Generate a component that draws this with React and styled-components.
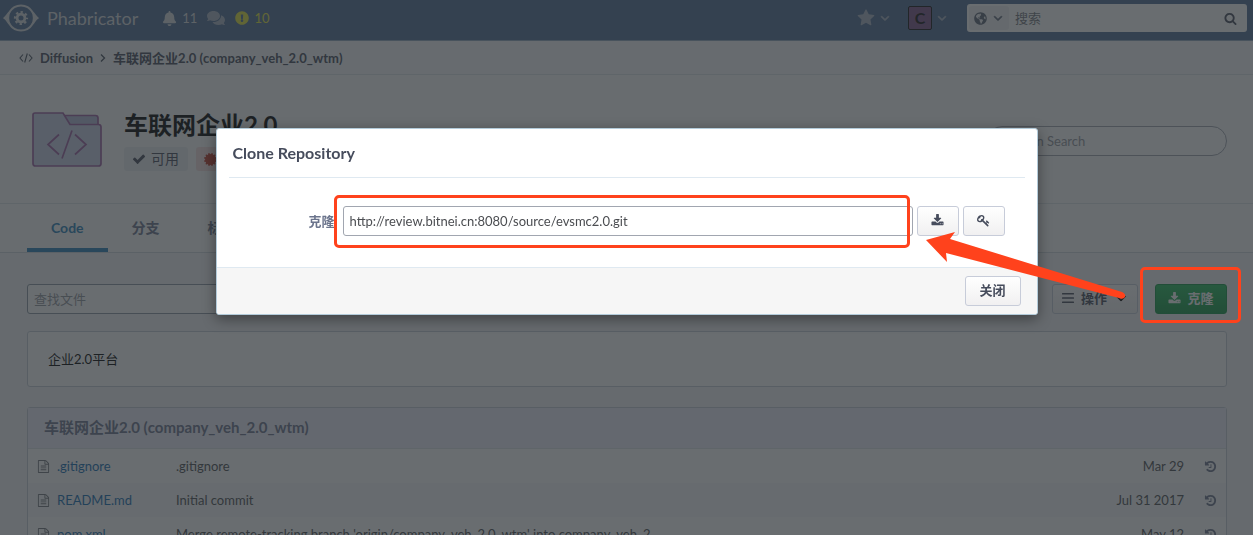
import React from "react";
import styled, { createGlobalStyle } from "styled-components";
import {
  FaBell,
  FaCertificate,
  FaComments,
  FaExclamationCircle,
  FaGlobeAmericas,
} from "react-icons/fa";

const GlobalStyle = createGlobalStyle`
  * {
    box-sizing: border-box;
  }
  body {
    margin: 0;
    overflow: hidden;
    background: #f3f5f7;
    color: #4b4d51;
    font-family: Lato, "Noto Sans CJK SC", sans-serif;
    font-size: 13px;
    line-height: 18px;
  }
  button, input {
    font-family: inherit;
    font-size: 13px;
    line-height: 18px;
  }
  a {
    color: inherit;
    text-decoration: none;
  }
`;

const PATHS = {
  download:
    "M1344 1344q0-26-19-45t-45-19-45 19-19 45 19 45 45 19 45-19 19-45zm256 0q0-26-19-45t-45-19-45 19-19 45 19 45 45 19 45-19 19-45zm128-224v320q0 40-28 68t-68 28h-1472q-40 0-68-28t-28-68v-320q0-40 28-68t68-28h465l135 136q58 56 136 56t136-56l136-136h464q40 0 68 28t28 68zm-325-569q17 41-14 70l-448 448q-18 19-45 19t-45-19l-448-448q-31-29-14-70 17-39 59-39h256v-448q0-26 19-45t45-19h256q26 0 45 19t19 45v448h256q42 0 59 39z",
  key:
    "M832 512q0-80-56-136t-136-56-136 56-56 136q0 42 19 83-41-19-83-19-80 0-136 56t-56 136 56 136 136 56 136-56 56-136q0-42-19-83 41 19 83 19 80 0 136-56t56-136zm851 704q0 17-49 66t-66 49q-9 0-28.5-16t-36.5-33-38.5-40-24.5-26l-96 96 220 220q28 28 28 68 0 42-39 81t-81 39q-40 0-68-28l-671-671q-176 131-365 131-163 0-265.5-102.5t-102.5-265.5q0-160 95-313t248-248 313-95q163 0 265.5 102.5t102.5 265.5q0 189-131 365l355 355 96-96q-3-3-26-24.5t-40-38.5-33-36.5-16-28.5q0-17 49-66t66-49q13 0 23 10 6 6 46 44.5t82 79.5 86.5 86 73 78 28.5 41z",
  history:
    "M1664 896q0 156-61 298t-164 245-245 164-298 61q-172 0-327-72.5t-264-204.5q-7-10-6.5-22.5t8.5-20.5l137-138q10-9 25-9 16 2 23 12 73 95 179 147t225 52q104 0 198.5-40.5t163.5-109.5 109.5-163.5 40.5-198.5-40.5-198.5-109.5-163.5-163.5-109.5-198.5-40.5q-98 0-188 35.5t-160 101.5l137 138q31 30 14 69-17 40-59 40h-448q-26 0-45-19t-19-45v-448q0-42 40-59 39-17 69 14l130 129q107-101 244.5-156.5t284.5-55.5q156 0 298 61t245 164 164 245 61 298zm-640-288v448q0 14-9 23t-23 9h-320q-14 0-23-9t-9-23v-64q0-14 9-23t23-9h224v-352q0-14 9-23t23-9h64q14 0 23 9t9 23z",
  check:
    "M1671 566q0 40-28 68l-724 724-136 136q-28 28-68 28t-68-28l-136-136-362-362q-28-28-28-68t28-68l136-136q28-28 68-28t68 28l294 295 656-657q28-28 68-28t68 28l136 136q28 28 28 68z",
  star:
    "M1728 647q0 22-26 48l-363 354 86 500q1 7 1 20 0 21-10.5 35.5t-30.5 14.5q-19 0-40-12l-449-236-449 236q-22 12-40 12-21 0-31.5-14.5t-10.5-35.5q0-6 2-20l86-500-364-354q-25-27-25-48 0-37 56-46l502-73 225-455q19-41 49-41t49 41l225 455 502 73q56 9 56 46z",
  search:
    "M1216 832q0-185-131.5-316.5t-316.5-131.5-316.5 131.5-131.5 316.5 131.5 316.5 316.5 131.5 316.5-131.5 131.5-316.5zm512 832q0 52-38 90t-90 38q-54 0-90-38l-343-342q-179 124-399 124-143 0-273.5-55.5t-225-150-150-225-55.5-273.5 55.5-273.5 150-225 225-150 273.5-55.5 273.5 55.5 225 150 150 225 55.5 273.5q0 220-124 399l343 343q37 37 37 90z",
  bars:
    "M192 256h1408q64 0 64 64v64q0 64-64 64H192q-64 0-64-64v-64q0-64 64-64zm0 544h1408q64 0 64 64v64q0 64-64 64H192q-64 0-64-64v-64q0-64 64-64zm0 544h1408q64 0 64 64v64q0 64-64 64H192q-64 0-64-64v-64q0-64 64-64z",
  angleDown:
    "M1395 736q0 13-10 23l-466 466q-10 10-23 10t-23-10l-466-466q-10-10-10-23t10-23l50-50q10-10 23-10t23 10l393 393 393-393q10-10 23-10t23 10l50 50q10 10 10 23z",
  file:
    "M1596 380q28 28 48 76t20 88v1152q0 40-28 68t-68 28h-1344q-40 0-68-28t-28-68v-1600q0-40 28-68t68-28h896q40 0 88 20t76 48zm-444-244v376h376q-10-29-22-41l-313-313q-12-12-41-22zm384 1528v-1024h-416q-40 0-68-28t-28-68v-416h-768v1536h1280zm-1024-864q0-14 9-23t23-9h704q14 0 23 9t9 23v64q0 14-9 23t-23 9h-704q-14 0-23-9t-9-23v-64zm736 224q14 0 23 9t9 23v64q0 14-9 23t-23 9h-704q-14 0-23-9t-9-23v-64q0-14 9-23t23-9h704zm0 256q14 0 23 9t9 23v64q0 14-9 23t-23 9h-704q-14 0-23-9t-9-23v-64q0-14 9-23t23-9h704z",
};

const Glyph = ({ name, size = 14, bold }) => (
  <svg
    width={size}
    height={size}
    viewBox="0 0 1792 1792"
    fill="currentColor"
    stroke={bold ? "currentColor" : "none"}
    strokeWidth="90"
    aria-hidden="true"
  >
    <path d={PATHS[name]} />
  </svg>
);

const CodeGlyph = () => (
  <svg width="14" height="10" viewBox="0 0 14 10" fill="none" stroke="currentColor" strokeWidth="1.1">
    <path d="M4 1.5L1 5l3 3.5M10 1.5L13 5l-3 3.5M8.3 0.5L5.7 9.5" />
  </svg>
);

const Logo = () => (
  <svg width="36" height="28" viewBox="0 0 36 28" fill="none" aria-hidden="true">
    <path
      d="M1.5 14C3.5 12.5 5 10 6.5 8C9 4 13 1.5 18 1.5S27 4 29.5 8C31 10 32.5 12.5 34.500 14C32.5 15.5 31 18 29.5 20C27 24 23 26.5 18 26.5S9 24 6.5 20C5 18 3.5 15.5 1.5 14Z"
      stroke="#d5d9de"
      strokeWidth="2"
    />
    <path d="M8 7L1 14l7 7C5.500 16.500 5.500 11.500 8 7ZM28 7L35 14l-7 7C30.500 16.500 30.500 11.500 28 7Z" fill="#d5d9de" />
    <circle cx="18" cy="14" r="3.900" stroke="#d5d9de" strokeWidth="2.800" />
    <circle cx="18" cy="14" r="6" stroke="#d5d9de" strokeWidth="2.200" strokeDasharray="2.36 2.352" strokeDashoffset="1.180" />
  </svg>
);

const FolderArt = () => (
  <svg width="70" height="55" viewBox="0 0 70 55" fill="#c9d0e8" stroke="#9c5fa0" strokeWidth="1.700" aria-hidden="true">
    <path d="M30 3.500h33.500q2.500 0 2.500 2.500v10H38z" fill="#b3bad6" />
    <path d="M3 1h28l7 11.500h28.500q2.500 0 2.500 2.500v36.500q0 2.500-2.500 2.500H3.500Q1 54 1 51.500V3q0-2 2-2z" />
    <path d="M27 22.500L16 32.500l11 10M43 22.500l11 10-11 10M40 18.500L30 46.500" fill="none" />
  </svg>
);

const TopBar = styled.header`
  display: flex;
  align-items: center;
  height: 41px;
  padding: 0 6px 4px 3px;
  background: #4f6d93;
  border-bottom: 1px solid #8fa9c0;
  color: #fff;
`;

const Brand = styled.a`
  display: flex;
  align-items: center;
  gap: 8px;
  font-size: 18px;
  color: #d5d9de;
`;

const Alerts = styled.nav`
  display: flex;
  align-items: center;
  gap: 10px;
  margin-left: 24px;
`;

const Alert = styled.a`
  display: flex;
  align-items: center;
  gap: 5px;
  color: ${(p) => p.$color || "#d5d9de"};
`;

const UserMenu = styled.div`
  display: flex;
  align-items: center;
  gap: 16px;
  margin-left: auto;
  margin-right: 18px;
`;

const MenuButton = styled.button`
  display: flex;
  align-items: center;
  gap: 3px;
  padding: 0;
  border: 0;
  background: none;
  color: #a9b3c3;
`;

const Avatar = styled.span`
  display: grid;
  place-items: center;
  width: 24px;
  height: 24px;
  border: 1px solid #111;
  border-radius: 2px;
  background: #7a5088;
  color: #111;
  font-size: 16px;
  font-weight: bold;
`;

const SearchBox = styled.form`
  display: flex;
  align-items: center;
  width: 280px;
  height: 28px;
  padding: 2px 10px 2px 2px;
  border-radius: 3px;
  background: #fff;
  color: #464c5c;
`;

const Scope = styled.button`
  display: flex;
  align-items: center;
  justify-content: center;
  gap: 4px;
  width: 40px;
  height: 24px;
  padding: 0;
  border: 0;
  border-radius: 3px;
  background: #f0f2f4;
  color: #5d6577;
`;

const BareInput = styled.input`
  flex: 1;
  min-width: 0;
  padding: 0 6px;
  border: 0;
  outline: 0;
  background: none;
  &::placeholder {
    color: #74777d;
  }
`;

const IconButton = styled.button`
  display: flex;
  padding: 0;
  border: 0;
  background: none;
  color: inherit;
`;

const Crumbs = styled.nav`
  display: flex;
  align-items: center;
  gap: 7px;
  height: 34px;
  padding: 0 19px;
  border-bottom: 1px solid #dde3e8;
  background: #f7f9fa;
  color: #464c5c;
  font-weight: bold;
`;

const Profile = styled.section`
  display: flex;
  align-items: flex-start;
  height: 129px;
  padding: 37px 26px 0 32px;
  border-bottom: 1px solid #dde3e8;
  background: #fafbfc;
`;

const Heading = styled.div`
  margin: -4px auto 0 22px;
`;

const RepoName = styled.h1`
  margin: 0 0 6px;
  color: #000;
  font-size: 24px;
  line-height: 33px;
`;

const Tags = styled.div`
  display: flex;
  gap: 8px;
`;

const Tag = styled.span`
  display: flex;
  align-items: center;
  gap: 5px;
  min-width: 64px;
  height: 24px;
  padding: 0 8px;
  border-radius: 3px;
  background: ${(p) => (p.$danger ? "#f3dede" : "#eceef1")};
  color: ${(p) => (p.$danger ? "#c0392b" : "#464c5c")};
  font-size: 14px;
`;

const PatternSearch = styled.input`
  width: 240px;
  height: 30px;
  margin-top: 14px;
  padding: 0 14px;
  border: 1px solid #a1a6b0;
  border-radius: 15px;
  background: #fff;
  &::placeholder {
    color: #92969d;
  }
`;

const Tabs = styled.nav`
  display: flex;
  height: 49px;
  padding-left: 27px;
  border-bottom: 1px solid #cfd6dd;
  background: #fafbfc;
`;

const Tab = styled.a`
  display: flex;
  align-items: center;
  height: 48px;
  padding: 4px 24px 0;
  border-bottom: 4px solid ${(p) => (p.$active ? "#2980b9" : "transparent")};
  color: ${(p) => (p.$active ? "#2980b9" : "#6b748c")};
  font-size: 14px;
  font-weight: bold;
`;

const Main = styled.main`
  padding: 31px 26px 0 27px;
`;

const Toolbar = styled.div`
  display: flex;
  align-items: center;
  gap: 17px;
`;

const FileSearch = styled.input`
  width: 280px;
  height: 30px;
  margin-right: auto;
  padding: 0 6px;
  border: 1px solid #8c98a3;
  border-radius: 3px;
  background: #fff;
  &::placeholder {
    color: #92969d;
  }
`;

const Button = styled.button`
  display: inline-flex;
  align-items: center;
  justify-content: center;
  gap: 6px;
  min-width: ${(p) => p.$width};
  height: 30px;
  padding: 0 0 2px;
  border: 1px solid ${(p) => (p.$green ? "#139543" : "#c7ccd9")};
  border-radius: 3px;
  background: ${(p) =>
    p.$green
      ? "linear-gradient(to bottom, #23bb5b, #139543)"
      : "linear-gradient(to bottom, #fff, #f1f0f1)"};
  color: ${(p) => (p.$green ? "#fff" : "#464c5c")};
  font-weight: bold;
`;

const Caret = styled.span`
  display: flex;
  color: #000;
`;

const CloneSpot = styled.div`
  position: relative;
`;

const Mark = styled.div`
  position: absolute;
  inset: ${(p) => p.$inset};
  z-index: 30;
  border: 3px solid #ff421c;
  border-radius: 5px;
  pointer-events: none;
`;

const Panel = styled.section`
  margin-top: ${(p) => p.$gap};
  border: 1px solid #c7ced8;
  border-radius: 3px;
  background: #fff;
`;

const Readme = styled.p`
  margin: 0;
  padding: 18px 20px;
  color: #000;
`;

const PanelTitle = styled.h2`
  margin: 0;
  padding: 10px 16px 11px;
  border-bottom: 1px solid #dde3e8;
  background: #eeeefa;
  color: #6b748c;
  font-size: 15px;
  line-height: 19px;
`;

const Files = styled.table`
  width: 100%;
  border-collapse: collapse;
  tr:nth-child(even) {
    background: #f7f9fa;
  }
  td {
    height: 34px;
    padding: 0;
  }
`;

const NameCell = styled.td`
  width: 148px;
  color: #136cb2;
  a {
    display: flex;
    align-items: center;
    gap: 7px;
    padding-left: 9px;
  }
  svg {
    color: #74777d;
  }
`;

const DateCell = styled.td`
  width: 160px;
  text-align: right;
`;

const HistoryCell = styled.td`
  width: 42px;
  a {
    display: flex;
    justify-content: center;
    padding-left: 10px;
    color: #6b748c;
  }
`;

const Mask = styled.div`
  position: fixed;
  inset: 0;
  z-index: 10;
  background: rgba(41, 47, 51, 0.7);
`;

const Dialog = styled.div`
  position: fixed;
  top: 128px;
  left: 0;
  right: 0;
  z-index: 20;
  width: 822px;
  max-width: 96%;
  margin: 0 auto;
  border: 1px solid #b3cbda;
  border-radius: 3px;
  background: #fff;
  box-shadow: 0 4px 14px rgba(0, 0, 0, 0.4);
`;

const DialogTitle = styled.h2`
  margin: 0 12px;
  padding: 14px 4px 15px;
  border-bottom: 1px solid #dfe9f1;
  color: #464c5c;
  font-size: 16px;
  line-height: 19px;
`;

const CloneRow = styled.div`
  display: flex;
  align-items: center;
  gap: 4px;
  padding: 28px 32px 31px 92px;
`;

const CloneLabel = styled.label`
  margin-right: 4px;
  color: #6b748c;
  font-weight: bold;
`;

const UriField = styled.div`
  position: relative;
  flex: 1;
`;

const UriInput = styled.input`
  display: block;
  width: 100%;
  height: 30px;
  padding: 0 6px;
  border: 1px solid #a1a6b0;
  border-radius: 3px;
  background: #fff;
  color: #4b4d51;
`;

const DialogFoot = styled.footer`
  display: flex;
  justify-content: flex-end;
  padding: 8px 16px;
  border-top: 1px solid #dfe9f1;
  border-radius: 0 0 3px 3px;
  background: #f6f6f6;
`;

const Arrow = styled.svg`
  position: absolute;
  top: 101px;
  left: 706px;
  z-index: 40;
  pointer-events: none;
`;

const FILES = [
  { name: ".gitignore", message: ".gitignore", date: "Mar 29" },
  { name: "README.md", message: "Initial commit", date: "Jul 31 2017" },
  {
    name: "pom.xml",
    message: "Merge remote-tracking branch 'origin/company_veh_2.0_wtm' into company_veh_2",
    date: "May 12",
  },
];

function Header() {
  return (
    <TopBar>
      <Brand href="#">
        <Logo />
        Phabricator
      </Brand>
      <Alerts>
        <Alert href="#">
          <FaBell size={15} />
          11
        </Alert>
        <Alert href="#" $color="#a9b3c3" aria-label="Messages">
          <FaComments size={18} />
        </Alert>
        <Alert href="#" $color="#e5e53a">
          <FaExclamationCircle size={14} />
          10
        </Alert>
      </Alerts>
      <UserMenu>
        <MenuButton aria-label="Favorites">
          <Glyph name="star" size={18} />
          <Glyph name="angleDown" bold />
        </MenuButton>
        <MenuButton aria-label="Account">
          <Avatar>C</Avatar>
          <Glyph name="angleDown" bold />
        </MenuButton>
      </UserMenu>
      <SearchBox>
        <Scope type="button" aria-label="Search scope">
          <FaGlobeAmericas size={13} />
          <Glyph name="angleDown" bold />
        </Scope>
        <BareInput placeholder="搜索" aria-label="搜索" />
        <IconButton aria-label="Submit search">
          <Glyph name="search" size={13} />
        </IconButton>
      </SearchBox>
    </TopBar>
  );
}

function CloneDialog() {
  return (
    <Dialog role="dialog" aria-labelledby="clone-title">
      <DialogTitle id="clone-title">Clone Repository</DialogTitle>
      <CloneRow>
        <CloneLabel htmlFor="clone-uri">克隆</CloneLabel>
        <UriField>
          <UriInput id="clone-uri" readOnly value="http://review.bitnei.cn:8080/source/evsmc2.0.git" />
          <Mark $inset="-11px 3px -12px -9px" />
        </UriField>
        <Button $width="42px" aria-label="Download">
          <Glyph name="download" size={13} />
        </Button>
        <Button $width="42px" aria-label="Manage credentials">
          <Glyph name="key" size={13} />
        </Button>
      </CloneRow>
      <DialogFoot>
        <Button $width="56px">关闭</Button>
      </DialogFoot>
      <Arrow width="206" height="76" viewBox="0 0 206 76" aria-hidden="true">
        <path
          d="M3 10L32 2L27 9L199 62Q203 64 202 67Q200 70 196 68L23 23L24 32Z"
          fill="#ff421c"
        />
      </Arrow>
    </Dialog>
  );
}

export default function App() {
  return (
    <>
      <GlobalStyle />
      <Header />
      <Crumbs>
        <CodeGlyph />
        <a href="#">Diffusion</a>
        <svg width="6" height="8" viewBox="0 0 6 8" fill="none" stroke="currentColor" strokeWidth="1.3">
          <path d="M1 0.5L4.5 4L1 7.5" />
        </svg>
        <span>车联网企业2.0 (company_veh_2.0_wtm)</span>
      </Crumbs>
      <Profile>
        <FolderArt />
        <Heading>
          <RepoName>车联网企业2.0</RepoName>
          <Tags>
            <Tag>
              <Glyph name="check" />
              可用
            </Tag>
            <Tag $danger>
              <FaCertificate size={13} />
            </Tag>
          </Tags>
        </Heading>
        <PatternSearch placeholder="Pattern Search" aria-label="Pattern Search" />
      </Profile>
      <Tabs>
        <Tab href="#" $active>
          Code
        </Tab>
        <Tab href="#">分支</Tab>
        <Tab href="#">标签</Tab>
      </Tabs>
      <Main>
        <Toolbar>
          <FileSearch placeholder="查找文件" aria-label="查找文件" />
          <Button $width="86px">
            <Glyph name="bars" />
            操作
            <Caret>
              <Glyph name="angleDown" size={16} bold />
            </Caret>
          </Button>
          <CloneSpot>
            <Button $width="72px" $green>
              <Glyph name="download" size={13} />
              克隆
            </Button>
            <Mark $inset="-17px -14px -9px -15px" />
          </CloneSpot>
        </Toolbar>
        <Panel $gap="17px">
          <Readme>企业2.0平台</Readme>
        </Panel>
        <Panel $gap="20px">
          <PanelTitle>车联网企业2.0 (company_veh_2.0_wtm)</PanelTitle>
          <Files>
            <tbody>
              {FILES.map((file) => (
                <tr key={file.name}>
                  <NameCell>
                    <a href="#">
                      <Glyph name="file" size={13} />
                      {file.name}
                    </a>
                  </NameCell>
                  <td>{file.message}</td>
                  <DateCell>{file.date}</DateCell>
                  <HistoryCell>
                    <a href="#" aria-label={`History of ${file.name}`}>
                      <Glyph name="history" size={13} />
                    </a>
                  </HistoryCell>
                </tr>
              ))}
            </tbody>
          </Files>
        </Panel>
      </Main>
      <Mask />
      <CloneDialog />
    </>
  );
}
